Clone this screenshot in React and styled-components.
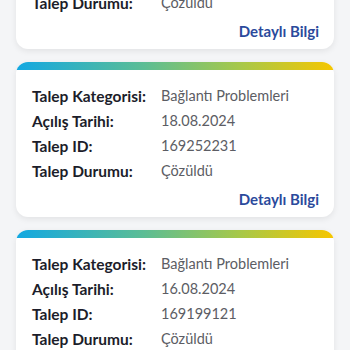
import React from 'react'
import styled, { createGlobalStyle } from 'styled-components';

const GlobalStyle = createGlobalStyle`
  html, body {
    margin: 0;
    padding: 0;
    background: #f4f5f7;
    overflow: hidden;
  }
  body {
    font-family: Lato, "Open Sans", sans-serif;
  }
`

const talepler = [
  { kategori: 'Bağlantı Problemleri', tarih: '18.08.2024', id: '169252231', durum: 'Çözüldü' },
  { kategori: 'Bağlantı Problemleri', tarih: '18.08.2024', id: '169252231', durum: 'Çözüldü' },
  { kategori: 'Bağlantı Problemleri', tarih: '16.08.2024', id: '169199121', durum: 'Çözüldü' },
];

const TalepCard = ({ talep }) => {
  return (
    <Card>
      <Band />
      <Body>
        <Rows>
          <Label>Talep Kategorisi:</Label>
          <Value>{talep.kategori}</Value>
          <Label>Açılış Tarihi:</Label>
          <Value>{talep.tarih}</Value>
          <Label>Talep ID:</Label>
          <Value>{talep.id}</Value>
          <Label>Talep Durumu:</Label>
          <Value>{talep.durum}</Value>
        </Rows>
        <Footer>
          <Link href="#" onClick={(e) => e.preventDefault()}>Detaylı Bilgi</Link>
        </Footer>
      </Body>
    </Card>
  )
}

const App = () => {
  return (
    <>
      <GlobalStyle />
      <Page>
        <List>
          {talepler.map((t, i) => <TalepCard key={i} talep={t} />)}
        </List>
      </Page>
    </>
  )
}

export default App;

const Page = styled.div`
  width: 350px;
  height: 350px;
  overflow: hidden;
  padding: 0 16px;
  box-sizing: border-box;
`

const List = styled.div`
  display: flex;
  flex-direction: column;
  gap: 13px;
  margin-top: -106px;
`

const Card = styled.div`
  background: #ffffff;
  border-radius: 12px;
  overflow: hidden;
  box-shadow: 0 2px 6px rgba(0, 0, 0, 0.08);
`

const Band = styled.div`
  height: 8px;
  background: linear-gradient(90deg, #13a8e2 0%, #5bbd95 40%, #a6c84a 70%, #f6c600 100%);
`

const Body = styled.div`
  padding: 13px 15px 8px 16px;
`

const Rows = styled.div`
  display: grid;
  grid-template-columns: 129px 1fr;
  grid-auto-rows: 25px;
  align-items: center;
`

const Label = styled.span`
  font-size: 15.5px;
  font-weight: 700;
  color: #1c1d2a;
`

const Value = styled.span`
  font-size: 14.5px;
  font-weight: 400;
  color: #5c5d64;
`

const Footer = styled.div`
  display: flex;
  justify-content: flex-end;
  margin-top: 6px;
  height: 20px;
  align-items: center;
`

const Link = styled.a`
  font-size: 15px;
  font-weight: 700;
  color: #2b4a9c;
  text-decoration: none;
`
